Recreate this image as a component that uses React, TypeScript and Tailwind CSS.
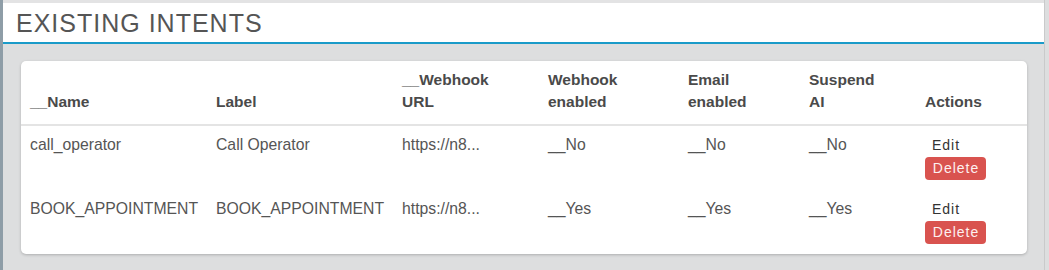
import React from "react";

type Intent = {
  name: string;
  label: string;
  url: string;
  webhook: string;
  email: string;
  suspend: string;
};

const intents: Intent[] = [
  { name: "call_operator", label: "Call Operator", url: "https://n8...", webhook: "__No", email: "__No", suspend: "__No" },
  { name: "BOOK_APPOINTMENT", label: "BOOK_APPOINTMENT", url: "https://n8...", webhook: "__Yes", email: "__Yes", suspend: "__Yes" },
];

const th = "pl-[9px] pt-[8px] pb-[11px] text-left align-bottom font-bold text-[15.5px] leading-[22px] text-[#4a4a4a] border-b-2 border-[#e4e4e4]";
const td = "pl-[9px] pt-[8px] pb-[10px] align-top text-[15.75px] leading-[22px] text-[#555] whitespace-nowrap";

export default function App() {
  return (
    <div
      className="w-[1049px] h-[270px] flex bg-[#dddedf] overflow-hidden"
      style={{ fontFamily: '"Liberation Sans", Arial, sans-serif' }}
    >
      <div className="w-[3px] bg-[#8e9da7] shrink-0" />
      <div className="flex-1 flex flex-col">
        <div className="h-[3px] bg-[#e3e3e4]" />
        <div className="h-[41px] bg-white border-b-2 border-[#1a9bc9] pl-[13px] flex items-center">
          <h1 className="text-[25px] tracking-[1px] text-[#555] leading-none pt-[1px]">EXISTING INTENTS</h1>
        </div>
        <div className="pt-[17px] pl-[18px] pr-[17px]">
          <div className="bg-white rounded-[5px] shadow-[0_1px_3px_rgba(0,0,0,0.22)]">
            <table className="w-full border-collapse table-fixed">
              <colgroup>
                <col className="w-[186px]" />
                <col className="w-[186px]" />
                <col className="w-[146px]" />
                <col className="w-[140px]" />
                <col className="w-[121px]" />
                <col className="w-[116px]" />
                <col />
              </colgroup>
              <thead>
                <tr>
                  <th className={th}>__Name</th>
                  <th className={th}>Label</th>
                  <th className={th}>__Webhook<br />URL</th>
                  <th className={th}>Webhook<br />enabled</th>
                  <th className={th}>Email<br />enabled</th>
                  <th className={th}>Suspend<br />AI</th>
                  <th className={th}>Actions</th>
                </tr>
              </thead>
              <tbody>
                {intents.map((it) => (
                  <tr key={it.name}>
                    <td className={td}>{it.name}</td>
                    <td className={td}>{it.label}</td>
                    <td className={td}>{it.url}</td>
                    <td className={td}>{it.webhook}</td>
                    <td className={td}>{it.email}</td>
                    <td className={td}>{it.suspend}</td>
                    <td className="pl-[9px] pt-[8px] pb-[10px] align-top">
                      <div className="flex flex-col items-start">
                        <button className="pl-[7px] h-[22px] text-[14px] leading-[22px] tracking-[1px] text-[#333]">Edit</button>
                        <button className="mt-[1px] h-[23px] w-[61px] flex items-center justify-center pl-[1px] rounded-[4px] bg-[#d9534f] text-[14px] leading-[23px] tracking-[1px] text-[#fdf0f0]">
                          Delete
                        </button>
                      </div>
                    </td>
                  </tr>
                ))}
              </tbody>
            </table>
          </div>
        </div>
      </div>
      <div className="w-px bg-[#c9cacb] shrink-0" />
      <div className="w-[4px] bg-[#dddedf] shrink-0" />
    </div>
  );
}
